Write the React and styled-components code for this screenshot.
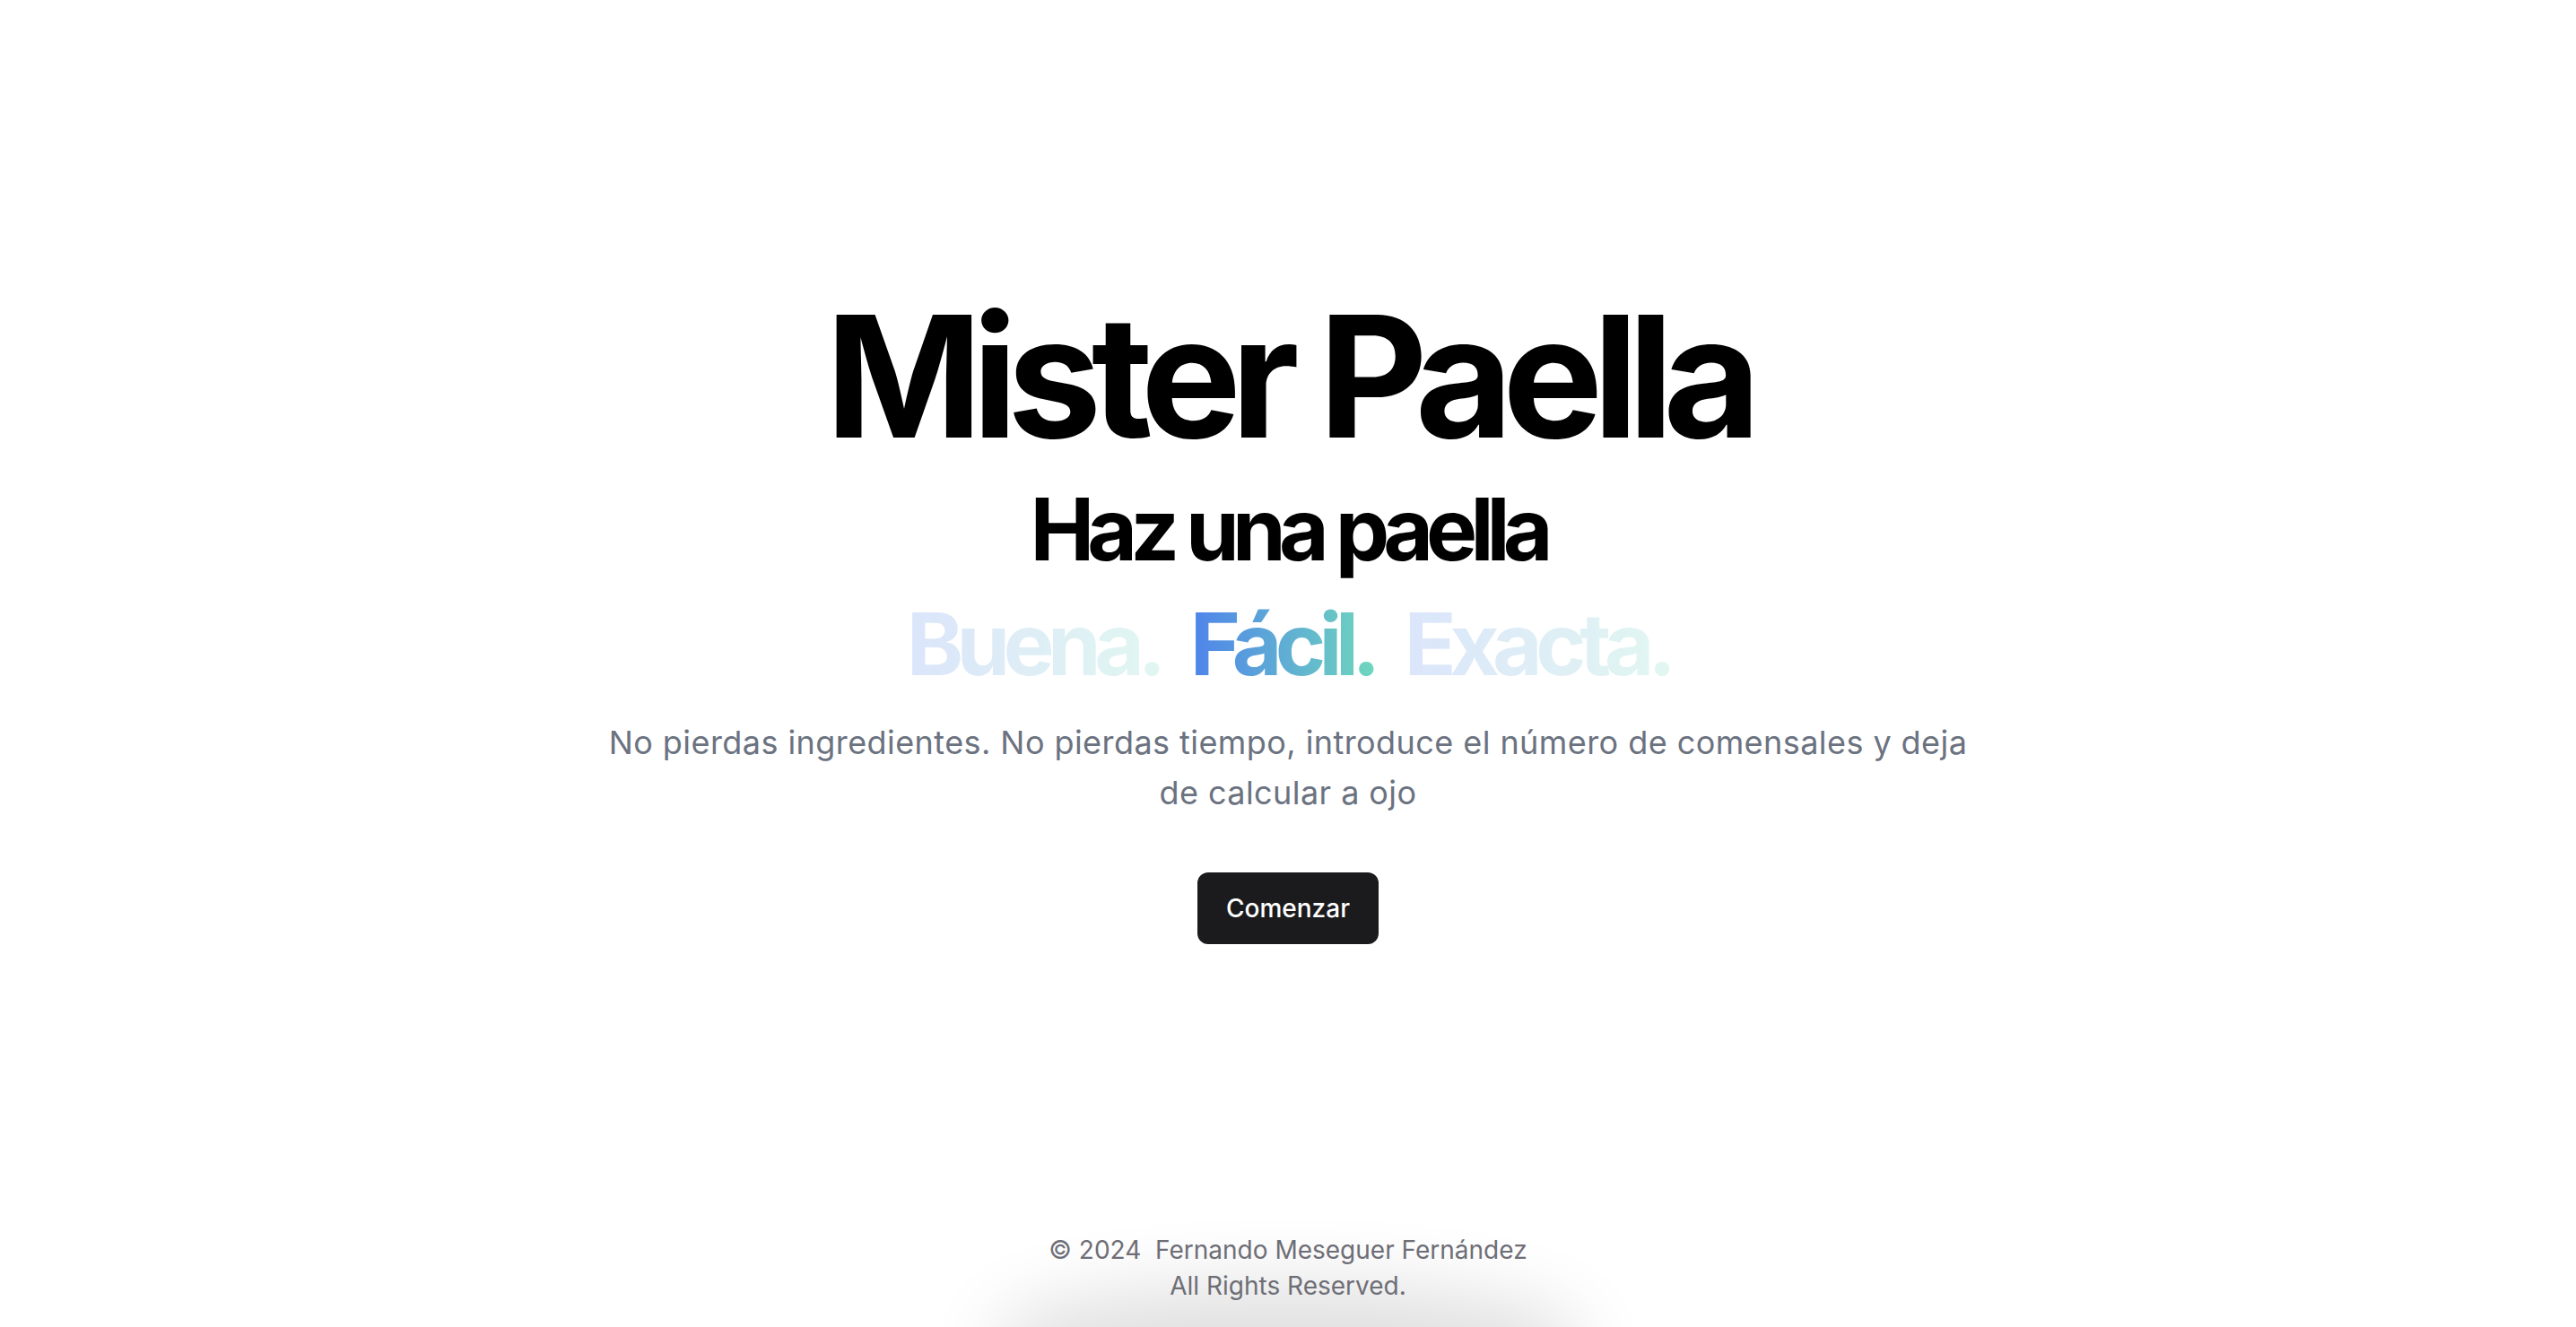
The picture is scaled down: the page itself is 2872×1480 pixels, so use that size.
import React from "react";
import styled, { createGlobalStyle } from "styled-components";

const GlobalStyle = createGlobalStyle`
  html, body {
    margin: 0;
    padding: 0;
    background: #ffffff;
    overflow: hidden;
  }
  body {
    font-family: Inter, "Noto Sans", "Liberation Sans", sans-serif;
    -webkit-font-smoothing: antialiased;
  }
`;

const Page = styled.div`
  min-height: 100vh;
  display: flex;
  flex-direction: column;
  align-items: center;
  position: relative;
  overflow: hidden;
`;

const Hero = styled.main`
  flex: 1;
  display: flex;
  flex-direction: column;
  align-items: center;
  padding-top: 326px;
  text-align: center;
`;

const Title = styled.h1`
  margin: 0;
  font-size: 188px;
  line-height: 1;
  font-weight: 700;
  letter-spacing: -0.062em;
  color: #000;
`;

const Subtitle = styled.h2`
  margin: 28px 0 0;
  font-size: 96px;
  line-height: 1;
  font-weight: 700;
  letter-spacing: -0.082em;
  color: #000;
`;

const Words = styled.div`
  margin-top: 32px;
  font-size: 96px;
  line-height: 1;
  font-weight: 700;
  letter-spacing: -0.08em;
  display: flex;
  gap: 34px;
`;

const Word = styled.span`
  background: linear-gradient(to right, #4e83eb, #6fd6bd);
  -webkit-background-clip: text;
  background-clip: text;
  color: transparent;
  opacity: ${(p) => (p.$active ? 1 : 0.2)};
`;

const Lead = styled.p`
  margin: 34px 0 0;
  max-width: 1536px;
  font-size: 36px;
  line-height: 56px;
  letter-spacing: 0.012em;
  color: #6b7280;
`;

const StartButton = styled.button`
  margin-top: 61px;
  height: 80px;
  padding: 0 32px;
  border: none;
  border-radius: 12px;
  background: #1b1b1d;
  color: #fff;
  font-family: inherit;
  font-size: 28px;
  font-weight: 500;
  cursor: pointer;
`;

const Footer = styled.footer`
  position: relative;
  z-index: 0;
  padding: 0 0 26px;
  text-align: center;
  font-size: 28px;
  line-height: 40px;
  color: #6e6e76;

  &::before {
    content: "";
    position: absolute;
    left: 50%;
    bottom: -46px;
    width: 560px;
    height: 46px;
    transform: translateX(-50%);
    border-radius: 50%;
    box-shadow: 0 0 80px 50px rgba(0, 0, 0, 0.12);
    z-index: -1;
  }
`;

const FooterLine = styled.div``;

const words = [
  { text: "Buena.", active: false },
  { text: "Fácil.", active: true },
  { text: "Exacta.", active: false },
];

const App = () => {
  return (
    <>
      <GlobalStyle />
      <Page>
        <Hero>
          <Title>Mister Paella</Title>
          <Subtitle>Haz una paella</Subtitle>
          <Words>
            {words.map((w) => (
              <Word key={w.text} $active={w.active}>
                {w.text}
              </Word>
            ))}
          </Words>
          <Lead>
            No pierdas ingredientes. No pierdas tiempo, introduce el número de
            comensales y deja de calcular a ojo
          </Lead>
          <StartButton>Comenzar</StartButton>
        </Hero>
        <Footer>
          <FooterLine>© 2024{"\u00a0\u00a0"}Fernando Meseguer Fernández</FooterLine>
          <FooterLine>All Rights Reserved.</FooterLine>
        </Footer>
      </Page>
    </>
  );
};

export default App;
